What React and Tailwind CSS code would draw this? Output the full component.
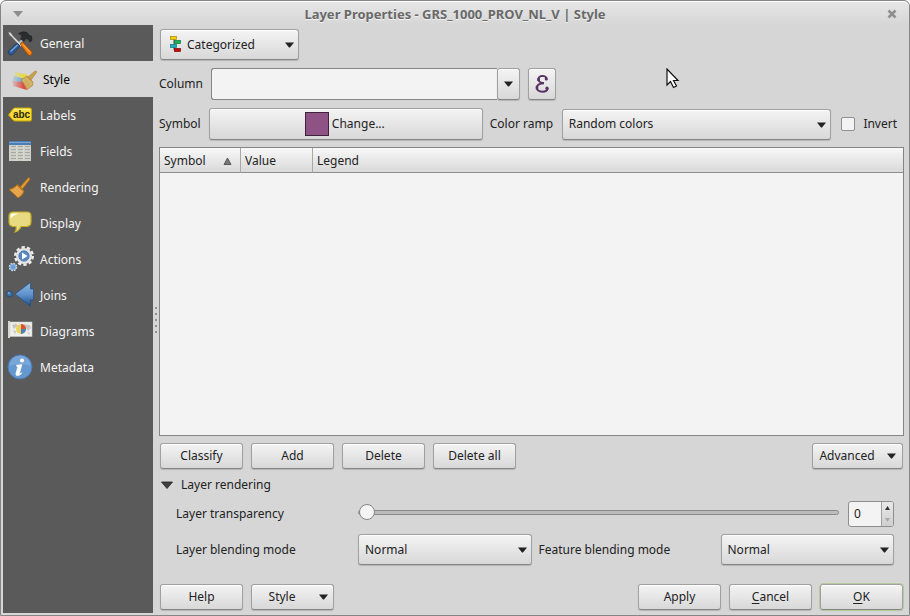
import { useState } from 'react';
import clsx from 'clsx';

const raised =
  'rounded-[3px] border border-[#a0a0a0] border-b-[#858585] bg-linear-to-b from-[#f4f4f4] to-[#d8d8d8] shadow-[0_1px_1px_#b4b4b4,inset_0_1px_0_#ffffff]';

function GeneralIcon() {
  return (
    <svg width="28" height="28" viewBox="0 0 28 28">
      <path d="M11.500 13.500l7-5.500 1.500 1.500-6.500 6z" fill="#b8bcc0" stroke="#666" strokeWidth=".4" />
      <path d="M2.500 3l2.500 1 1.500 2.500L16 16l-1.500 1.500-9-10L3.500 6z" fill="#e3e3e3" stroke="#8c8c8c" strokeWidth=".5" />
      <path d="M14 15l2.500-2 9.500 10q.5 2.500-2 3.500-1 0-2-1z" fill="#f57c0c" stroke="#9c4700" strokeWidth=".7" />
      <path d="M17 15.500l7 8" stroke="#ffb45c" strokeWidth="1" />
      <path d="M11 14l3 3-7.500 8.500q-2 1-3.500-.5T2.500 22z" fill="#2d5c99" stroke="#16345f" strokeWidth=".7" />
      <path d="M11.500 16l-7 6.500" stroke="#7da7dc" strokeWidth="1.200" />
      <path d="M12.500 4.500q4.500-3 8.500-1l2.500 3 2 .5.500 4.500-2 1.500-2-3-2-.5-2 3-3.500-2.500 1.500-2.500q-1.500-2.500-3.500-3z" fill="#292d2f" stroke="#151719" strokeWidth=".5" />
    </svg>
  );
}

function StyleIcon() {
  return (
    <svg width="28" height="28" viewBox="0 0 28 28">
      <defs>
        <linearGradient id="fade">
          <stop offset="0" stopColor="#fff" stopOpacity="0" />
          <stop offset=".5" stopColor="#fff" />
        </linearGradient>
        <mask id="fadeMask">
          <rect width="28" height="28" fill="url(#fade)" />
        </mask>
      </defs>
      <g mask="url(#fadeMask)">
        <path d="M6 7l12 3-3 5-12-3z" fill="#e6d93c" />
        <path d="M4 11l11 3-1 5-12-3z" fill="#62a8d8" />
        <path d="M2 16l11 1 4 8-14-4z" fill="#dd4840" />
      </g>
      <path d="M18 12l7-6q2-.5 1.500 1.500L21 15z" fill="#c9a04c" stroke="#a98235" strokeWidth=".6" />
      <path d="M11 15l6-4 6 6-.5 3.500-5.500 4q-1.500-5-6-9.500z" fill="#d3b266" stroke="#a98235" strokeWidth=".7" />
      <path d="M13 17l4 5M15.500 15.500l4 5M17 12l5.500 5.500" stroke="#bd984a" strokeWidth=".6" />
    </svg>
  );
}

function LabelsIcon() {
  return (
    <svg width="28" height="28" viewBox="0 0 28 28">
      <path d="M2.500 14l4.500-6q1-1 2-1h15q1.500 0 1.500 1.500v10q0 1.500-1.500 1.500H9q-1 0-2-1z" fill="#f8dc35" stroke="#c7a400" />
      <path d="M8 8.500h16" stroke="#fff17e" strokeWidth="1.500" />
      <text x="15.500" y="17" textAnchor="middle" fontFamily="Liberation Sans" fontWeight="bold" fontSize="10" fill="#2c2a10">abc</text>
    </svg>
  );
}

function FieldsIcon() {
  return (
    <svg width="28" height="28" viewBox="0 0 28 28">
      <rect x="3" y="4" width="22" height="20" fill="#cfd0c9" />
      <rect x="3" y="4" width="22" height="4" fill="#4f7db8" />
      <path d="M3 5.500h22" stroke="#7ba2d3" />
      <path d="M5 9.500h5M12 9.500h5M19 9.500h5M5 12.500h5M12 12.500h5M19 12.500h5M5 15.500h5M12 15.500h5M19 15.500h5M5 18.500h5M12 18.500h5M19 18.500h5M5 21.500h5M12 21.500h5M19 21.500h5" stroke="#a7a99f" strokeWidth="1" />
      <path d="M10.500 8v16M17.500 8v16" stroke="#d9dad3" />
    </svg>
  );
}

function RenderingIcon() {
  return (
    <svg width="28" height="28" viewBox="0 0 28 28">
      <path d="M14 14l8.500-9.500 1.500.5-.5 2-7 9z" fill="#e29a32" stroke="#a8650f" strokeWidth=".7" />
      <path d="M3 16.500q4-.5 8-4.500l7 6.500q-1.500 4-6 6.500z" fill="#e3a045" stroke="#a8650f" strokeWidth=".8" />
      <path d="M5.500 17l7 6M8 16l6 5M10 14.500l6 5" stroke="#f0b665" strokeWidth=".8" />
      <path d="M11 11.500l7 7" stroke="#b9771f" strokeWidth="1.300" />
    </svg>
  );
}

function DisplayIcon() {
  return (
    <svg width="28" height="28" viewBox="0 0 28 28">
      <path d="M7 3h14q4 0 4 4v6q0 4-4 4.500h-6q-2 4.500-6 5.500 2-3 1-5.500H7q-4-.5-4-4.500V7q0-4 4-4z" fill="#e8da80" stroke="#c3ab25" strokeWidth="1.200" />
      <path d="M4.500 10V7.500q0-3 3-3H13Q6.500 6 4.500 10z" fill="#fffef0" />
    </svg>
  );
}

function ActionsIcon() {
  return (
    <svg width="28" height="28" viewBox="0 0 28 28">
      <circle cx="18" cy="11" r="8.800" fill="none" stroke="#ededed" strokeWidth="2.400" strokeDasharray="3.300 2.230" />
      <circle cx="18" cy="11" r="6.500" fill="#5588c4" stroke="#e4e4e4" strokeWidth="3" />
      <circle cx="18" cy="11" r="5.200" fill="none" stroke="#2e5c98" strokeWidth=".7" />
      <path d="M16 7.500l5.500 3.500-5.500 3.500z" fill="#fff" />
      <circle cx="7" cy="22" r="3.600" fill="#5d93c9" stroke="#c9d6e2" strokeWidth="1.400" strokeDasharray="1.700 1.100" />
      <circle cx="7" cy="22" r="2.900" fill="#6aa0d5" stroke="#c9d6e2" strokeWidth=".5" />
    </svg>
  );
}

function JoinsIcon() {
  return (
    <svg width="28" height="28" viewBox="0 0 28 28">
      <defs>
        <linearGradient id="joins" x2="0" y2="1">
          <stop offset="0" stopColor="#8fb9e4" />
          <stop offset=".5" stopColor="#5f92cb" />
          <stop offset="1" stopColor="#1c4a86" />
        </linearGradient>
      </defs>
      <circle cx="3.500" cy="13" r="3" fill="#3c72ac" stroke="#1c426f" strokeWidth=".7" />
      <path d="M9 13L24.500 1.500V8H27.500v11h-3v6.500z" fill="url(#joins)" stroke="#254f83" strokeWidth=".7" />
      <circle cx="2.800" cy="12" r="1" fill="#7fabda" />
    </svg>
  );
}

function DiagramsIcon() {
  return (
    <svg width="28" height="28" viewBox="0 0 28 28">
      <rect x="4" y="5" width="22" height="14.500" fill="#efefec" stroke="#c9c9c5" strokeWidth=".6" />
      <path d="M6 8l4-1.500 2 2L9 11l-1.500 1zM17 7l7 1 1 3-3 3-3-4zM7 13l3 1-1 4zM21 15l3 1-1 2z" fill="#c6c7c2" />
      <rect x="2" y="4" width="2" height="17" fill="#d7d7d2" />
      <circle cx="15" cy="12" r="5" fill="#e9d35c" />
      <path d="M15 12V7a5 5 0 0 1 5 5z" fill="#d9503e" />
      <path d="M15 12h5a5 5 0 0 1-5 5z" fill="#4b80bb" />
    </svg>
  );
}

function MetadataIcon() {
  return (
    <svg width="28" height="28" viewBox="0 0 28 28">
      <circle cx="14" cy="14" r="12" fill="#6698d0" stroke="#4a7ab3" strokeWidth="1" />
      <path d="M3.500 13a10.500 10.500 0 0 1 21 0q-10-4-21 0z" fill="#79a6d9" />
      <circle cx="16" cy="7.500" r="2" fill="#fff" />
      <path d="M10.500 12.200l5.500-.7-2.500 8.500q-.2 1.200 2.500-.2-2 2.900-4.500 2.900-2.200-.2-1.500-2.700l1.700-5.800q0-1-1.200-1z" fill="#fff" stroke="#fff" strokeWidth=".6" />
    </svg>
  );
}

function CategorizedIcon() {
  return (
    <svg width="12" height="16" viewBox="0 0 12 16" className="pointer-events-none absolute left-[10px] top-[7px]">
      <path d="M4 2v12M4 6h4M4 14h4" stroke="#555" fill="none" />
      <rect x=".5" y=".5" width="6" height="3" fill="#f5d000" stroke="#a38a00" strokeWidth=".7" />
      <rect x="4.500" y="4.500" width="6" height="3" fill="#17b558" stroke="#0a7636" strokeWidth=".7" />
      <rect x=".5" y="8.500" width="6" height="3" fill="#1bafbd" stroke="#0d7782" strokeWidth=".7" />
      <rect x="4.500" y="12.500" width="6" height="3" fill="#c40d0d" stroke="#7c0505" strokeWidth=".7" />
    </svg>
  );
}

function ExpressionIcon() {
  return (
    <svg width="16" height="20" viewBox="0 0 16 20">
      <path d="M12.800 4.500Q11.500 1.800 8.500 1.800 4.500 2 4.300 5.200 4.500 8.700 10 9" fill="none" stroke="#583263" strokeWidth="1.800" />
      <path d="M10 9.300Q3 9.500 2.800 13.500 3 17.500 8.500 17.800q4.500-.2 5.300-3.300" fill="none" stroke="#583263" strokeWidth="1.900" />
      <path d="M4.600 4v3M3 12v3.500" stroke="#583263" strokeWidth="2.600" />
      <circle cx="12.300" cy="5" r="1.600" fill="#583263" />
      <circle cx="13" cy="14.200" r="1.600" fill="#583263" />
    </svg>
  );
}

function Arrow({ className }) {
  return (
    <svg width="9" height="6" viewBox="0 0 9 6" className={clsx('pointer-events-none shrink-0', className)}>
      <path d="M0 .5h9L5 5.500H4z" fill="#222" />
    </svg>
  );
}

function Select({ id, label, options, className, selectClassName, children }) {
  return (
    <div className={clsx('relative', className)}>
      <select id={id} aria-label={label} className={clsx('block h-[31px] w-full appearance-none pr-5 outline-none', raised, selectClassName)}>
        {options.map((option) => (
          <option key={option}>{option}</option>
        ))}
      </select>
      {children}
      <Arrow className="absolute right-[5px] top-[13px]" />
    </div>
  );
}

function Button({ className, children }) {
  return (
    <button type="button" className={clsx('flex h-[26px] items-center justify-center pb-px', raised, className || 'w-[83px]')}>
      {children}
    </button>
  );
}

const pages = [
  { name: 'General', Icon: GeneralIcon },
  { name: 'Style', Icon: StyleIcon },
  { name: 'Labels', Icon: LabelsIcon },
  { name: 'Fields', Icon: FieldsIcon },
  { name: 'Rendering', Icon: RenderingIcon },
  { name: 'Display', Icon: DisplayIcon },
  { name: 'Actions', Icon: ActionsIcon },
  { name: 'Joins', Icon: JoinsIcon },
  { name: 'Diagrams', Icon: DiagramsIcon },
  { name: 'Metadata', Icon: MetadataIcon },
];

const blendModes = ['Normal', 'Lighten', 'Screen', 'Dodge', 'Addition', 'Darken', 'Multiply'];

export default function App() {
  const [page, setPage] = useState('Style');
  const [transparency, setTransparency] = useState(0);

  const changeTransparency = (value) => {
    setTransparency(Math.min(100, Math.max(0, Number(value) || 0)));
  };

  return (
    <div className="relative flex min-h-screen flex-col rounded-t-md border border-[#858585] bg-[#d6d6d6] font-['Noto_Sans',sans-serif] text-[12px] leading-[18px] text-[#222]">
      {/* Title bar */}
      <header className="flex h-6 items-center rounded-t-md border-t border-white bg-linear-to-b from-[#e6e6e6] to-[#d6d6d6] px-3">
        <button type="button" aria-label="Window menu">
          <svg width="10" height="6" viewBox="0 0 10 6">
            <path d="M0 0h10L5 6z" fill="#8e8e8e" />
          </svg>
        </button>
        <h1 className="flex-1 text-center text-[13px] font-bold text-[#696969] [text-shadow:0_1px_0_#f2f2f2]">
          Layer Properties - GRS_1000_PROV_NL_V | Style
        </h1>
        <button type="button" aria-label="Close">
          <svg width="10" height="10" viewBox="0 0 10 10">
            <path d="M1.500 1.500l7 7M8.500 1.500l-7 7" stroke="#8e8e8e" strokeWidth="2.500" />
          </svg>
        </button>
      </header>

      <div className="flex flex-1 pl-[2px]">
        <nav className="mb-[2px] w-[150px] shrink-0 bg-[#5a5a5a]">
          {pages.map(({ name, Icon }) => (
            <button
              key={name}
              type="button"
              onClick={() => setPage(name)}
              className={clsx(
                'flex h-9 w-full items-center text-left',
                page === name ? 'gap-[5px] bg-[#d6d6d6] pl-[7px] text-black' : 'gap-[6px] pl-[3px] text-[#f4f4f4]'
              )}
            >
              <Icon />
              <span className="pt-px">{name}</span>
            </button>
          ))}
        </nav>

        {/* Splitter */}
        <div className="flex w-[6px] shrink-0 flex-col items-center justify-center gap-1">
          {[0, 1, 2, 3, 4].map((dot) => (
            <span key={dot} className="size-[2px] bg-[#8f8f8f]" />
          ))}
        </div>

        <main className="flex min-w-0 flex-1 flex-col pb-[5px] pr-[5px] pt-1">
          <Select
            label="Renderer"
            options={['Categorized', 'Single Symbol', 'Graduated', 'Rule-based']}
            className="ml-px w-[139px]"
            selectClassName="pl-[26px]"
          >
            <CategorizedIcon />
          </Select>

          <div className="mt-2 flex items-center">
            <label htmlFor="column" className="w-[52px]">Column</label>
            <input id="column" type="text" className="h-8 w-[286px] rounded-l-[3px] border border-r-0 border-[#858585] bg-[#f3f3f3] px-2 outline-none" />
            <button type="button" aria-label="Choose column" className={clsx('flex h-8 w-[23px] items-center justify-center', raised)}>
              <Arrow />
            </button>
            <button type="button" aria-label="Expression" className={clsx('ml-2 flex h-8 w-7 items-center justify-center', raised)}>
              <ExpressionIcon />
            </button>
          </div>

          <div className="mt-2 flex items-center">
            <span className="w-[50px]">Symbol</span>
            <button type="button" className={clsx('flex h-8 flex-1 items-center justify-center gap-[3px] pr-[2px]', raised)}>
              <span className="size-6 border border-[#3d2439] bg-[#8e5384]" />
              Change...
            </button>
            <label htmlFor="ramp" className="ml-[7px] w-[72px]">Color ramp</label>
            <Select id="ramp" options={['Random colors']} className="flex-1" selectClassName="pl-[6px]" />
            <label className="ml-[10px] mr-[7px] flex items-center gap-2">
              <input type="checkbox" className="size-[14px] appearance-none rounded-[2px] border border-[#8e8e8e] bg-[#f3f3f3] checked:bg-[#8e5384]" />
              Invert
            </label>
          </div>

          <div className="mt-[7px] flex-1 border border-[#858585] bg-[#f3f3f3]">
            <table className="w-full table-fixed border-separate border-spacing-0">
              <thead>
                <tr className="h-[25px] bg-linear-to-b from-[#f8f8f8] to-[#d8d8d8] text-left">
                  <th className="w-[81px] border-b border-r border-b-[#8e8e8e] border-r-[#a8a8a8] px-1 pb-0 pt-px font-normal">
                    <span className="flex items-center justify-between pr-1">
                      Symbol
                      <svg width="9" height="8" viewBox="0 0 9 8">
                        <path d="M4.500 1L8 7.500H1z" fill="#777" stroke="#444" strokeWidth=".8" />
                      </svg>
                    </span>
                  </th>
                  <th className="w-[72px] border-b border-r border-b-[#8e8e8e] border-r-[#a8a8a8] px-1 pb-0 pt-px font-normal">Value</th>
                  <th className="border-b border-b-[#8e8e8e] px-1 pb-0 pt-px font-normal">Legend</th>
                </tr>
              </thead>
              <tbody />
            </table>
          </div>

          <div className="mt-[7px] flex gap-2 px-px">
            <Button>Classify</Button>
            <Button>Add</Button>
            <Button>Delete</Button>
            <Button>Delete all</Button>
            <Button className="ml-auto w-[91px] gap-3">
              Advanced
              <Arrow />
            </Button>
          </div>

          <section>
            <h2 className="flex h-8 items-center">
              <button type="button" className="flex items-center gap-2 pl-[2px]">
                <svg width="12" height="8" viewBox="0 0 12 8">
                  <path d="M.5 1h11L6 7.500z" fill="#3f3f3f" stroke="#222" strokeWidth=".8" />
                </svg>
                Layer rendering
              </button>
            </h2>
            <div className="flex items-center pl-[17px] pr-[10px]">
              <label htmlFor="transparency" className="w-[182px]">Layer transparency</label>
              <input
                id="transparency"
                type="range"
                min="0"
                max="100"
                value={transparency}
                onChange={(e) => changeTransparency(e.target.value)}
                className="mb-1 h-4 min-w-0 flex-1 appearance-none bg-transparent outline-none [&::-webkit-slider-runnable-track]:h-[5px] [&::-webkit-slider-runnable-track]:rounded-full [&::-webkit-slider-runnable-track]:border [&::-webkit-slider-runnable-track]:border-[#8a8a8a] [&::-webkit-slider-runnable-track]:bg-[#bcbcbc] [&::-webkit-slider-thumb]:-mt-[7px] [&::-webkit-slider-thumb]:size-4 [&::-webkit-slider-thumb]:appearance-none [&::-webkit-slider-thumb]:rounded-full [&::-webkit-slider-thumb]:border [&::-webkit-slider-thumb]:border-[#858585] [&::-webkit-slider-thumb]:bg-[#f4f4f4]"
              />
              <div className="ml-[9px] flex h-[26px] w-[46px] overflow-hidden rounded-[3px] border border-[#8e8e8e] bg-[#f3f3f3]">
                <input
                  type="text"
                  aria-label="Transparency value"
                  value={transparency}
                  onChange={(e) => changeTransparency(e.target.value)}
                  className="min-w-0 flex-1 pl-[5px] outline-none"
                />
                <div className="flex w-3 flex-col border-l border-[#a0a0a0] bg-linear-to-b from-[#e8e8e8] to-[#d0d0d0]">
                  <button type="button" aria-label="Increase" onClick={() => changeTransparency(transparency + 1)} className="flex flex-1 items-center justify-center">
                    <svg width="5" height="4" viewBox="0 0 5 4"><path d="M0 4h5L2.500 0z" fill="#333" /></svg>
                  </button>
                  <button type="button" aria-label="Decrease" onClick={() => changeTransparency(transparency - 1)} className="flex flex-1 items-center justify-center">
                    <svg width="5" height="4" viewBox="0 0 5 4"><path d="M0 0h5L2.500 4z" fill="#a8a8a8" /></svg>
                  </button>
                </div>
              </div>
            </div>
            <div className="mt-[7px] flex items-center pl-[17px] pr-[10px]">
              <label htmlFor="layerBlend" className="w-[182px]">Layer blending mode</label>
              <Select id="layerBlend" options={blendModes} className="flex-1" selectClassName="pl-[6px]" />
              <label htmlFor="featureBlend" className="ml-[7px] w-[182px]">Feature blending mode</label>
              <Select id="featureBlend" options={blendModes} className="flex-1" selectClassName="pl-[6px]" />
            </div>
          </section>

          <footer className="mt-[19px] flex gap-2 px-px">
            <Button>Help</Button>
            <Button className="w-[83px] gap-6 pl-3">
              Style
              <Arrow />
            </Button>
            <Button className="ml-auto w-[83px]">Apply</Button>
            <Button>
              <span><span className="underline underline-offset-2">C</span>ancel</span>
            </Button>
            <Button className="w-[83px] outline outline-[#b4cc9c]">
              <span><span className="underline underline-offset-2">O</span>K</span>
            </Button>
          </footer>
        </main>
      </div>

      {/* Mouse pointer */}
      <svg width="14" height="21" viewBox="0 0 14 21" className="pointer-events-none absolute left-[665px] top-[67px]">
        <path d="M1 1v16l3.500-3.500L7.500 19.500l3-1.500-3-5.500H12z" fill="#fff" stroke="#111" strokeWidth="1.200" />
      </svg>
    </div>
  );
}
